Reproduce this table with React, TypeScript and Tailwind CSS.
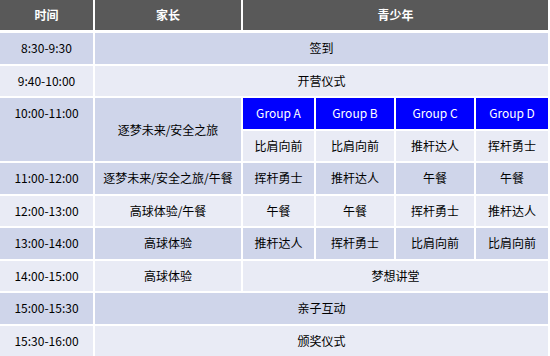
import React from "react";

const DARK = "bg-[#cfd5ea]";
const LIGHT = "bg-[#e9ebf5]";

function Cell({
  children,
  bg,
  className = "",
}: {
  children?: React.ReactNode;
  bg: string;
  className?: string;
}) {
  return (
    <div className={`${bg} flex items-center justify-center text-black ${className}`}>
      {children}
    </div>
  );
}

export default function App() {
  const rows5: [string, string, string[]][] = [];
  return (
    <div
      className="w-[550px] h-[356px] bg-white overflow-hidden text-[12px] leading-none"
      style={{ fontFamily: '"Noto Sans CJK SC", "Noto Sans", sans-serif' }}
    >
      {/* header */}
      <div className="grid grid-cols-[93px_146px_71px_78px_78px_72px] gap-x-[2px] h-[30px]">
        <div className="bg-[#595959] text-white font-bold flex items-center justify-center">时间</div>
        <div className="bg-[#595959] text-white font-bold flex items-center justify-center">家长</div>
        <div className="col-span-4 bg-[#595959] text-white font-bold flex items-center justify-center">青少年</div>
      </div>
      {/* body */}
      <div className="mt-[3px] h-[323px] grid grid-cols-[93px_146px_71px_78px_78px_72px] grid-rows-[repeat(10,minmax(0,1fr))] gap-[2px]">
        <Cell bg={DARK}>8:30-9:30</Cell>
        <Cell bg={DARK} className="col-span-5">签到</Cell>

        <Cell bg={LIGHT}>9:40-10:00</Cell>
        <Cell bg={LIGHT} className="col-span-5">开营仪式</Cell>

        <div className={`${DARK} row-span-2 flex flex-col`}>
          <div className="h-[30.5px] flex items-center justify-center text-black">10:00-11:00</div>
        </div>
        <Cell bg={DARK} className="row-span-2">逐梦未来/安全之旅</Cell>
        <Cell bg="bg-[#0000ff]" className="!text-white">Group A</Cell>
        <Cell bg="bg-[#0000ff]" className="!text-white">Group B</Cell>
        <Cell bg="bg-[#0000ff]" className="!text-white">Group C</Cell>
        <Cell bg="bg-[#0000ff]" className="!text-white">Group D</Cell>

        <Cell bg={LIGHT}>比肩向前</Cell>
        <Cell bg={LIGHT}>比肩向前</Cell>
        <Cell bg={LIGHT}>推杆达人</Cell>
        <Cell bg={LIGHT}>挥杆勇士</Cell>

        <Cell bg={DARK}>11:00-12:00</Cell>
        <Cell bg={DARK}>逐梦未来/安全之旅/午餐</Cell>
        <Cell bg={DARK}>挥杆勇士</Cell>
        <Cell bg={DARK}>推杆达人</Cell>
        <Cell bg={DARK}>午餐</Cell>
        <Cell bg={DARK}>午餐</Cell>

        <Cell bg={LIGHT}>12:00-13:00</Cell>
        <Cell bg={LIGHT}>高球体验/午餐</Cell>
        <Cell bg={LIGHT}>午餐</Cell>
        <Cell bg={LIGHT}>午餐</Cell>
        <Cell bg={LIGHT}>挥杆勇士</Cell>
        <Cell bg={LIGHT}>推杆达人</Cell>

        <Cell bg={DARK}>13:00-14:00</Cell>
        <Cell bg={DARK}>高球体验</Cell>
        <Cell bg={DARK}>推杆达人</Cell>
        <Cell bg={DARK}>挥杆勇士</Cell>
        <Cell bg={DARK}>比肩向前</Cell>
        <Cell bg={DARK}>比肩向前</Cell>

        <Cell bg={LIGHT}>14:00-15:00</Cell>
        <Cell bg={LIGHT}>高球体验</Cell>
        <Cell bg={LIGHT} className="col-span-4">梦想讲堂</Cell>

        <Cell bg={DARK}>15:00-15:30</Cell>
        <Cell bg={DARK} className="col-span-5">亲子互动</Cell>

        <Cell bg={LIGHT}>15:30-16:00</Cell>
        <Cell bg={LIGHT} className="col-span-5">颁奖仪式</Cell>
      </div>
      {rows5.length ? null : null}
    </div>
  );
}
